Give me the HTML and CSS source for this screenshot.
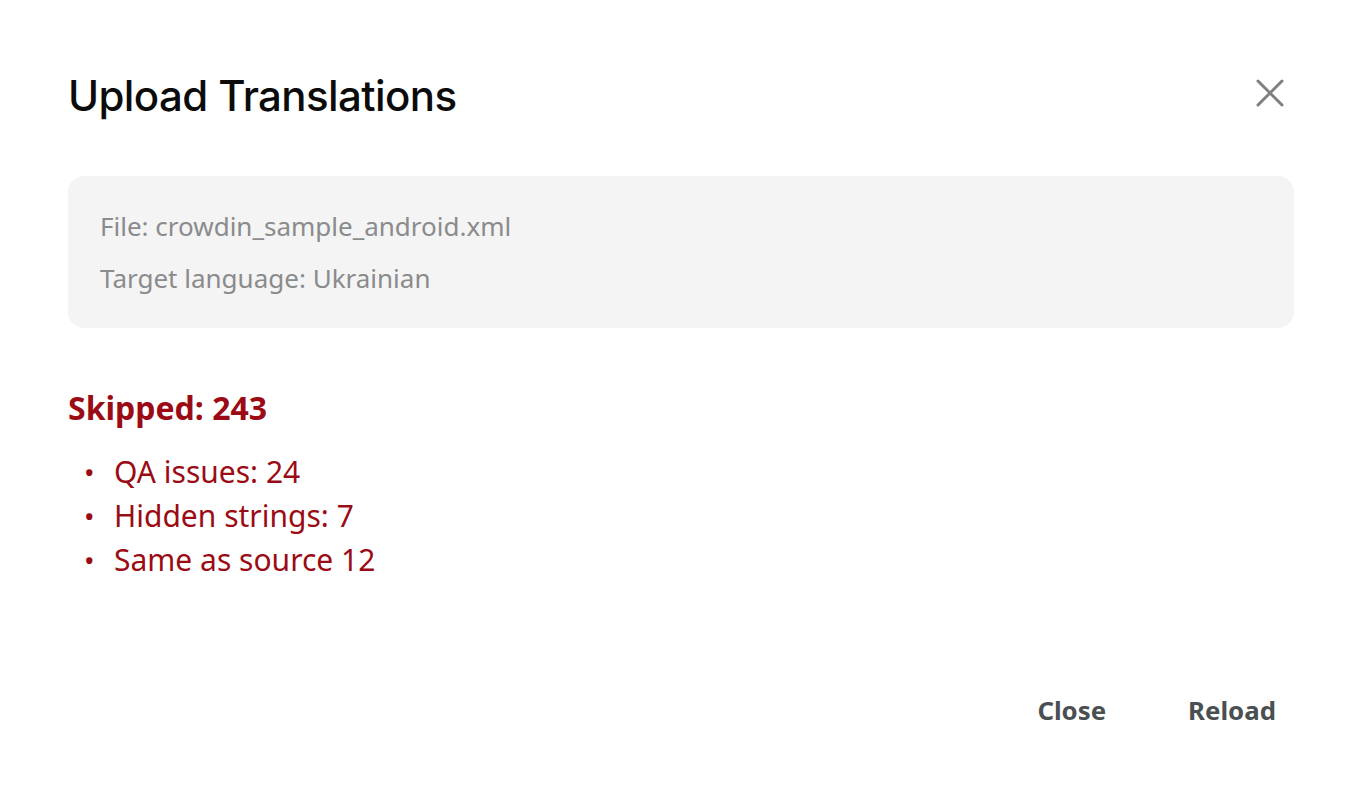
FILE: index.html
```html
<!DOCTYPE html>
<html lang="en">
  <head>
    <title>Upload Translations</title>
    <meta charset="utf-8" />
    <link rel="stylesheet" href="styles.css">
  </head>
  <body>
    <div class="dialog">
      <div class="fejlec">
        <h1 class="cim">Upload Translations</h1>
        <button class="bezar" aria-label="Close">
          <svg width="28" height="28" viewBox="0 0 28 28">
            <path d="M2 2 L26 26 M26 2 L2 26" stroke="#7d7f80" stroke-width="3" stroke-linecap="round" />
          </svg>
        </button>
      </div>
      <div class="info">
        <p>File: crowdin_sample_android.xml</p>
        <p>Target language: Ukrainian</p>
      </div>
      <h2 class="kihagyott">Skipped: 243</h2>
      <ul class="lista">
        <li>QA issues: 24</li>
        <li>Hidden strings: 7</li>
        <li>Same as source 12</li>
      </ul>
      <div class="gombok">
        <button class="gomb">Close</button>
        <button class="gomb">Reload</button>
      </div>
    </div>
  </body>
</html>
```

FILE: styles.css
```css
body {
  margin: 0;
  background: #fff;
  font-family: "Noto Sans", sans-serif;
}
.dialog {
  padding: 66px 68px 0 68px;
}
.fejlec {
  display: flex;
  justify-content: space-between;
  align-items: flex-start;
}
.cim {
  margin: 0;
  font-family: Inter, sans-serif;
  font-weight: 500;
  font-size: 42px;
  letter-spacing: -0.6px;
  color: #0b0b0b;
  line-height: 60px;
}
.bezar {
  border: 0;
  background: none;
  padding: 0;
  margin: 13px 10px 0 0;
  cursor: pointer;
}
.info {
  margin-top: 50px;
  background: #f4f4f4;
  border-radius: 16px;
  padding: 24px 32px 24px 32px;
}
.info p {
  margin: 0;
  font-size: 26px;
  line-height: 52px;
  color: #8a8b8c;
}
.kihagyott {
  margin: 60px 0 0 0;
  font-size: 32px;
  font-weight: 700;
  color: #9b0b15;
  line-height: 40px;
}
.lista {
  list-style: none;
  margin: 22px 0 0 0;
  padding: 0;
  color: #9b0b15;
  font-size: 30px;
  line-height: 44px;
}
.lista li {
  display: flex;
}
.lista li::before {
  content: "\2022";
  width: 30px;
  margin-left: 16px;
  font-size: 28px;
}
.gombok {
  display: flex;
  justify-content: flex-end;
  gap: 82px;
  margin-top: 110px;
  padding-right: 18px;
}
.gomb {
  border: 0;
  background: none;
  padding: 0;
  font-family: "Noto Sans", sans-serif;
  font-weight: 700;
  font-size: 25.8px;
  color: #4a4f51;
  cursor: pointer;
}
```
